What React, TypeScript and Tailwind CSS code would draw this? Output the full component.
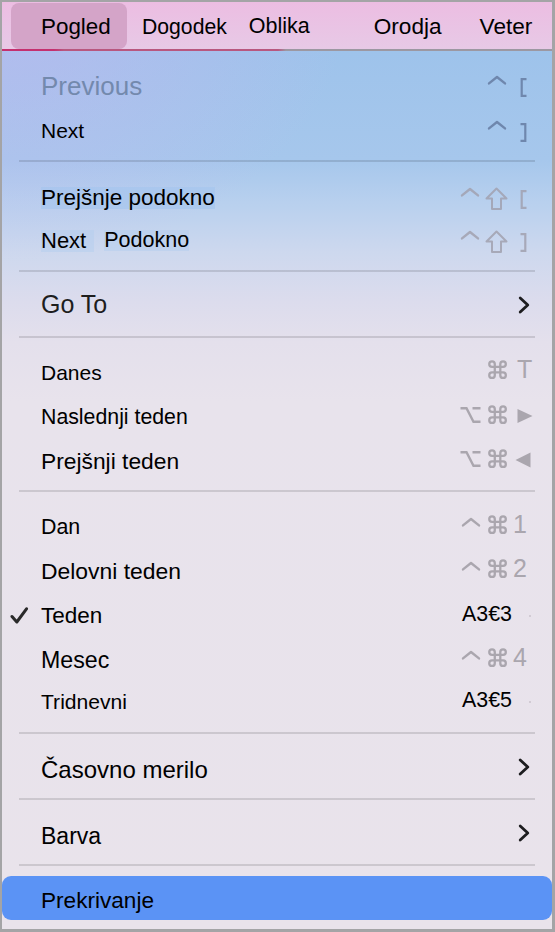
import React from "react";

const font = "font-['Liberation_Sans',Arial,Helvetica,sans-serif]";

type P = { className?: string };

function Caret({ className = "" }: P) {
  return (
    <svg width="20" height="32" viewBox="0 0 20 32" fill="none" stroke="currentColor" strokeWidth="2.4" strokeLinecap="round" strokeLinejoin="round" className={`shrink-0 ${className}`}>
      <path d="M2 13.4 L10 7 L18 13.4" />
    </svg>
  );
}

function Cmd({ className = "" }: P) {
  return (
    <svg width="20" height="32" viewBox="0 0 20 32" fill="none" stroke="currentColor" strokeWidth="2.5" strokeLinecap="round" strokeLinejoin="round" className={`shrink-0 ${className}`}>
      <g transform="translate(-1.5 1.6) scale(0.92)">
        <path d="M15 6v12a3 3 0 1 0 3-3H6a3 3 0 1 0 3 3V6a3 3 0 1 0-3 3h12a3 3 0 1 0-3-3" />
      </g>
    </svg>
  );
}

function Shift({ className = "" }: P) {
  return (
    <svg width="23" height="32" viewBox="0 0 23 32" fill="none" stroke="currentColor" strokeWidth="2" strokeLinejoin="round" className={`shrink-0 ${className}`}>
      <path d="M11.5 6.5 L21.5 16.5 H16 V27 H7 V16.5 H1.5 Z" />
    </svg>
  );
}

function Opt({ className = "" }: P) {
  return (
    <svg width="21" height="32" viewBox="0 0 21 32" fill="none" stroke="currentColor" strokeWidth="2.4" className={`shrink-0 ${className}`}>
      <path d="M0.5 6.2 H6.5 L13.5 19.8 H20.5 M12.5 6.2 H20.5" />
    </svg>
  );
}

function Open({ className = "" }: P) {
  return (
    <svg width="7" height="32" viewBox="0 0 7 32" fill="none" stroke="currentColor" strokeWidth="2.2" className={`shrink-0 ${className}`}>
      <path d="M6.5 9.2 H1.7 V25.8 H6.5" />
    </svg>
  );
}

function Close({ className = "" }: P) {
  return (
    <svg width="7" height="32" viewBox="0 0 7 32" fill="none" stroke="currentColor" strokeWidth="2.2" className={`shrink-0 ${className}`}>
      <path d="M0.5 9.2 H5.3 V25.8 H0.5" />
    </svg>
  );
}

function Play({ className = "" }: P) {
  return (
    <svg width="16" height="32" viewBox="0 0 16 32" fill="currentColor" className={`shrink-0 ${className}`}>
      <path d="M0.5 7 L15.5 14 L0.5 21 Z" />
    </svg>
  );
}

function Back({ className = "" }: P) {
  return (
    <svg width="16" height="32" viewBox="0 0 16 32" fill="currentColor" className={`shrink-0 ${className}`}>
      <path d="M15.5 6.5 V21.5 L0.5 14 Z" />
    </svg>
  );
}

function Chevron({ className = "" }: P) {
  return (
    <svg width="12" height="18" viewBox="0 0 12 18" fill="none" stroke="#1d1d1f" strokeWidth="2.8" strokeLinecap="round" strokeLinejoin="round" className={`shrink-0 ${className}`}>
      <path d="M2.2 2 L9.8 9 L2.2 16" />
    </svg>
  );
}

function Check() {
  return (
    <svg width="19" height="18" viewBox="0 0 19 18" fill="none" stroke="#2a2a2a" strokeWidth="3" strokeLinecap="round" strokeLinejoin="round" className="shrink-0">
      <path d="M2 9.5 L6.8 15 L16.5 1.8" />
    </svg>
  );
}

function Keys({ className = "", children }: P & { children: React.ReactNode }) {
  return <div className={`ml-auto mr-[12px] flex h-[32px] w-[80px] shrink-0 items-center ${className}`}>{children}</div>;
}

function Sep({ className = "" }: P) {
  return <div className={`mx-[17px] h-[2px] shrink-0 bg-black/[0.12] ${className}`} />;
}

export default function App() {
  return (
    <div className={`${font} flex h-[932px] w-[555px] flex-col overflow-hidden border-t-2 border-r-[3px] border-b-[3px] border-l-2 border-[#a4a4a6] bg-[image:radial-gradient(90%_40%_at_0%_0%,rgba(196,182,240,0.6),rgba(196,182,240,0)_70%),linear-gradient(180deg,#9bc1eb_0px,#9ec3eb_49px,#a6c7ec_158px,#b8d0ee_200px,#cdd8ee_250px,#dcdced_300px,#e4e0ec_340px,#e8e3ec_400px,#e9e3eb_100%)] text-black`}>
      {/* Menu bar */}
      <div className="flex h-[47px] shrink-0 items-stretch bg-[linear-gradient(180deg,#ecbde2,#e7c9e6)]">
        <div className="mt-[1px] ml-[9px] flex w-[116px] items-center rounded-[8px] bg-[#d4a4c8] pt-[3px] pl-[30px] text-[22.4px] leading-none">Pogled</div>
        <div className="ml-[15px] flex items-center pt-[3px] text-[21.2px] leading-none">Dogodek</div>
        <div className="ml-[22px] flex items-center pt-[3px] text-[21.5px] leading-none">Oblika</div>
        <div className="ml-[64px] flex items-center pt-[3px] text-[22.6px] leading-none">Orodja</div>
        <div className="ml-[38px] flex items-center pt-[3px] text-[22.6px] leading-none">Veter</div>
      </div>
      <div className="h-[2px] shrink-0 bg-[linear-gradient(90deg,#c4306f_0px,#c4306f_52px,#b8577f_62px,#b8577f_276px,#9c98a2_284px,#9c98a2_100%)]" />

      {/* Previous / Next */}
      <div className="mt-[12px] flex h-[45px] shrink-0 items-center pl-[39px]">
        <span className="text-[26px] leading-none text-[#7389ad]">Previous</span>
        <Keys className="text-[#6f87ad]">
          <Caret className="ml-[27px]" />
          <Open className="ml-[13px]" />
        </Keys>
      </div>
      <div className="flex h-[45px] shrink-0 items-center pl-[39px]">
        <span className="text-[21px] leading-none">Next</span>
        <Keys className="text-[#6f87ad]">
          <Caret className="ml-[27px]" />
          <Close className="ml-[13px]" />
        </Keys>
      </div>
      <Sep className="mt-[7px]" />

      {/* Podokno */}
      <div className="mt-[14px] flex h-[44px] shrink-0 items-center pl-[39px]">
        <span className="bg-[#a3c5ee]/60 text-[22.5px] leading-none">Prejšnje podokno</span>
        <Keys className="text-[#a4a8b9]">
          <Caret />
          <Shift className="ml-[5px]" />
          <Open className="ml-[12px]" />
        </Keys>
      </div>
      <div className="flex h-[41px] shrink-0 items-center pl-[39px]">
        <span className="bg-[#b3cdee]/50 pr-[8px] text-[22px] leading-none">Next</span>
        <span className="ml-[10px] bg-[#b3cdee]/50 text-[21.5px] leading-none">Podokno</span>
        <Keys className="text-[#a7a9b8]">
          <Caret />
          <Shift className="ml-[5px]" />
          <Close className="ml-[12px]" />
        </Keys>
      </div>
      <Sep className="mt-[9px]" />

      {/* Go To */}
      <div className="mt-[10px] flex h-[45px] shrink-0 items-center pl-[39px]">
        <span className="text-[25px] leading-none text-[#1e1e1e]">Go To</span>
        <Chevron className="mr-[22px] ml-auto" />
      </div>
      <Sep className="mt-[9px]" />

      {/* Navigation */}
      <div className="mt-[12px] flex h-[45px] shrink-0 items-center pl-[39px]">
        <span className="text-[21px] leading-none">Danes</span>
        <Keys className="text-[#aaa6ae]">
          <Cmd className="ml-[28px]" />
          <span className="mb-[6px] ml-[9px] text-[25px] leading-none">T</span>
        </Keys>
      </div>
      <div className="flex h-[46px] shrink-0 items-center pl-[39px]">
        <span className="text-[21.3px] leading-none">Naslednji teden</span>
        <Keys className="text-[#aaa6ae]">
          <Opt />
          <Cmd className="ml-[7px]" />
          <Play className="ml-[9px]" />
        </Keys>
      </div>
      <div className="flex h-[41px] shrink-0 items-center pl-[39px]">
        <span className="text-[22.8px] leading-none">Prejšnji teden</span>
        <Keys className="text-[#aaa6ae]">
          <Opt />
          <Cmd className="ml-[7px]" />
          <Back className="ml-[7px]" />
        </Keys>
      </div>
      <Sep className="mt-[8px]" />

      {/* Views */}
      <div className="mt-[13px] flex h-[45px] shrink-0 items-center pl-[39px]">
        <span className="text-[21.4px] leading-none">Dan</span>
        <Keys className="text-[#aaa6ae]">
          <Caret className="ml-[1px]" />
          <Cmd className="ml-[7px]" />
          <span className="mb-[6px] ml-[5px] text-[25px] leading-none">1</span>
        </Keys>
      </div>
      <div className="flex h-[43px] shrink-0 items-center pl-[39px]">
        <span className="text-[22.9px] leading-none">Delovni teden</span>
        <Keys className="text-[#aaa6ae]">
          <Caret className="ml-[1px]" />
          <Cmd className="ml-[7px]" />
          <span className="mb-[6px] ml-[5px] text-[25px] leading-none">2</span>
        </Keys>
      </div>
      <div className="flex h-[46px] shrink-0 items-center pl-[8px]">
        <Check />
        <span className="ml-[12px] text-[22.5px] leading-none">Teden</span>
        <Keys>
          <span className="mb-[3px] ml-[2px] text-[21.4px] leading-none">A3€3</span>
          <span className="ml-[17px] h-[2px] w-[2px] rounded-full bg-[#cac3cd]" />
        </Keys>
      </div>
      <div className="flex h-[43px] shrink-0 items-center pl-[39px]">
        <span className="text-[23.2px] leading-none">Mesec</span>
        <Keys className="text-[#aaa6ae]">
          <Caret className="ml-[1px]" />
          <Cmd className="ml-[7px]" />
          <span className="mb-[6px] ml-[5px] text-[25px] leading-none">4</span>
        </Keys>
      </div>
      <div className="flex h-[39px] shrink-0 items-center pl-[39px]">
        <span className="text-[21.1px] leading-none">Tridnevni</span>
        <Keys>
          <span className="mb-[2px] ml-[2px] text-[21.4px] leading-none">A3€5</span>
          <span className="ml-[17px] h-[2px] w-[2px] rounded-full bg-[#cac3cd]" />
        </Keys>
      </div>
      <Sep className="mt-[11px]" />

      <div className="mt-[14px] flex h-[44px] shrink-0 items-center pl-[39px]">
        <span className="text-[24px] leading-none">Časovno merilo</span>
        <Chevron className="mr-[22px] mb-[6px] ml-auto" />
      </div>
      <Sep className="mt-[6px]" />

      <div className="mt-[14px] flex h-[44px] shrink-0 items-center pl-[39px]">
        <span className="text-[23px] leading-none">Barva</span>
        <Chevron className="mr-[22px] mb-[6px] ml-auto" />
      </div>
      <Sep className="mt-[6px]" />

      <div className="mt-[10px] flex h-[44px] shrink-0 items-center rounded-[9px] bg-[#5b93f5] pt-[7px] pl-[39px]">
        <span className="text-[22.6px] leading-none">Prekrivanje</span>
      </div>
    </div>
  );
}
